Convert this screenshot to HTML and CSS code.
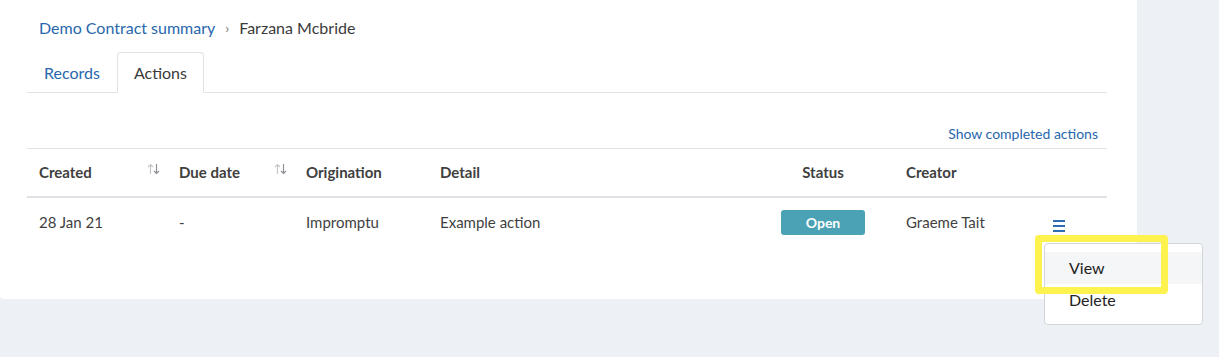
FILE: index.html
```html
<!DOCTYPE html>
<html lang="en">
<head>
    <meta charset="UTF-8" />
    <title>Farzana Mcbride - Actions</title>
    <link rel="stylesheet" href="styles.css">
</head>
<body>
  <main class="card">
    <nav class="breadcrumb">
      <a href="#">Demo Contract summary</a>
      <span class="sep">&rsaquo;</span>
      <span class="current">Farzana Mcbride</span>
    </nav>

    <ul class="tabs">
      <li><a href="#">Records</a></li>
      <li class="active"><a href="#">Actions</a></li>
    </ul>

    <div class="toolbar">
      <a href="#">Show completed actions</a>
    </div>

    <table class="actions">
      <thead>
        <tr>
          <th class="col-created">Created <span class="sort"><svg width="13" height="12" viewBox="0 0 13 12"><path d="M3.5 11V1.5M1 4l2.5-2.5L6 4" fill="none" stroke="#c4c7cc" stroke-width="1.2"/><path d="M9.5 1v9.5M7 8l2.5 2.5L12 8" fill="none" stroke="#8e9196" stroke-width="1.2"/></svg></span></th>
          <th class="col-due">Due date <span class="sort"><svg width="13" height="12" viewBox="0 0 13 12"><path d="M3.5 11V1.5M1 4l2.5-2.5L6 4" fill="none" stroke="#c4c7cc" stroke-width="1.2"/><path d="M9.5 1v9.5M7 8l2.5 2.5L12 8" fill="none" stroke="#8e9196" stroke-width="1.2"/></svg></span></th>
          <th class="col-origin">Origination</th>
          <th class="col-detail">Detail</th>
          <th class="col-status">Status</th>
          <th class="col-creator">Creator</th>
          <th class="col-menu"></th>
        </tr>
      </thead>
      <tbody>
        <tr>
          <td>28 Jan 21</td>
          <td>-</td>
          <td>Impromptu</td>
          <td>Example action</td>
          <td class="col-status"><span class="badge">Open</span></td>
          <td>Graeme Tait</td>
          <td class="col-menu">
            <div class="menu">
              <span class="hamburger"><i></i><i></i><i></i></span>
              <ul class="dropdown">
                <li class="hover">View</li>
                <li>Delete</li>
              </ul>
              <div class="highlight"></div>
            </div>
          </td>
        </tr>
      </tbody>
    </table>
  </main>
</body>
</html>
```

FILE: styles.css
```css
* {
    margin: 0;
    padding: 0;
    box-sizing: border-box;
}

body {
    font-family: 'Lato', 'Liberation Sans', sans-serif;
    background: #edf0f5;
    color: #3f3f3f;
    width: 1219px;
    height: 357px;
    overflow: hidden;
}

a {
    color: #2767ad;
    text-decoration: none;
}

.card {
    width: 1137px;
    height: 299px;
    background: #fff;
    border-bottom-left-radius: 4px;
    padding: 18px 30px 0 27px;
}

.breadcrumb {
    font-size: 16px;
    line-height: 20px;
    padding-left: 12px;
    display: flex;
    align-items: center;
}

    .breadcrumb .sep {
        color: #777;
        font-size: 14px;
        margin: 0 10px 0 10px;
    }

    .breadcrumb .current {
        color: #3b3b3b;
    }

.tabs {
    list-style: none;
    display: flex;
    margin-top: 14px;
    border-bottom: 1px solid #dfe2e6;
}

    .tabs li {
        height: 41px;
        margin-bottom: -1px;
        border: 1px solid transparent;
        border-radius: 4px 4px 0 0;
    }

        .tabs li a {
            display: block;
            font-size: 16px;
            line-height: 40px;
            padding: 0 16px;
        }

        .tabs li.active {
            border-color: #dfe2e6;
            border-bottom-color: #fff;
            background: #fff;
        }

            .tabs li.active a {
                color: #3b3b3b;
            }

.toolbar {
    text-align: right;
    margin-top: 32px;
    margin-bottom: 5px;
    padding-right: 9px;
    font-size: 14px;
    line-height: 18px;
}

.actions {
    width: 1080px;
    border-collapse: collapse;
    table-layout: fixed;
    font-size: 15px;
}

    .actions thead tr {
        border-top: 1px solid #dfe2e6;
        border-bottom: 2px solid #dfe2e6;
    }

    .actions th {
        text-align: left;
        font-weight: 700;
        color: #404040;
        line-height: 20px;
        padding: 13px 12px 14px;
    }

    .actions td {
        line-height: 20px;
        padding: 14px 12px 12px;
        vertical-align: top;
    }

.col-created, .col-due {
    position: relative;
}

.col-created { width: 140px; }
.col-due { width: 127px; }
.col-origin { width: 134px; }
.col-detail { width: 324px; }
.col-status { width: 142px; text-align: center !important; }
.col-creator { width: 146px; }
.col-menu { width: 67px; }

.sort {
    position: absolute;
    right: 7px;
    top: 14px;
    display: flex;
}

.badge {
    display: inline-block;
    background: #4aa2b4;
    color: #fff;
    font-weight: 700;
    font-size: 14px;
    line-height: 25px;
    width: 84px;
    border-radius: 3px;
    margin-top: -3px;
}

.menu {
    position: relative;
}

.hamburger {
    display: flex;
    flex-direction: column;
    gap: 3px;
    width: 12px;
    padding-top: 8px;
    margin-left: 1px;
}

    .hamburger i {
        display: block;
        height: 2px;
        background: #2f6db0;
    }

.dropdown {
    position: absolute;
    left: -8px;
    top: 31px;
    width: 159px;
    list-style: none;
    background: #fff;
    border: 1px solid #d2d5da;
    border-radius: 4px;
    padding: 8px 0;
    z-index: 5;
    font-size: 16px;
    color: #222;
}

    .dropdown li {
        line-height: 32px;
        padding-left: 24px;
    }

        .dropdown li.hover {
            background: #f5f6f8;
        }

.highlight {
    position: absolute;
    left: -17px;
    top: 23px;
    width: 133px;
    height: 59px;
    border: 7px solid #fef24f;
    border-radius: 4px;
    z-index: 6;
}
```
